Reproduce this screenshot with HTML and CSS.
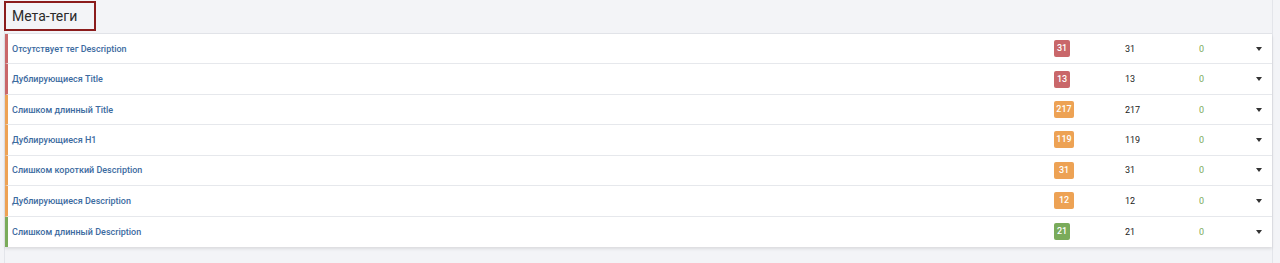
FILE: index.html
```html
<!DOCTYPE html>
<html>
<head>
<meta charset="utf-8">
<link rel="stylesheet" href="styles.css">
</head>
<body>
<div class="page">
  <div class="panel">
    <div class="panel-head">
      <h2 class="title">Мета-теги</h2>
    </div>
    <div class="rows">
      <div class="row red"><a class="name">Отсутствует тег Description</a><span class="badge">31</span><span class="num">31</span><span class="zero">0</span><span class="caret"></span></div>
      <div class="row red"><a class="name">Дублирующиеся Title</a><span class="badge">13</span><span class="num">13</span><span class="zero">0</span><span class="caret"></span></div>
      <div class="row orange"><a class="name">Слишком длинный Title</a><span class="badge">217</span><span class="num">217</span><span class="zero">0</span><span class="caret"></span></div>
      <div class="row orange"><a class="name">Дублирующиеся H1</a><span class="badge">119</span><span class="num">119</span><span class="zero">0</span><span class="caret"></span></div>
      <div class="row orange"><a class="name">Слишком короткий Description</a><span class="badge">31</span><span class="num">31</span><span class="zero">0</span><span class="caret"></span></div>
      <div class="row orange"><a class="name">Дублирующиеся Description</a><span class="badge">12</span><span class="num">12</span><span class="zero">0</span><span class="caret"></span></div>
      <div class="row green"><a class="name">Слишком длинный Description</a><span class="badge">21</span><span class="num">21</span><span class="zero">0</span><span class="caret"></span></div>
    </div>
  </div>
</div>
</body>
</html>
```
FILE: styles.css
```css
html, body {
  margin: 0;
  padding: 0;
  background: #f3f4f7;
  font-family: Roboto, "Liberation Sans", sans-serif;
}
.page {
  padding: 0 7px 0 4px;
  height: 263px;
  box-sizing: border-box;
}
.panel {
  border-left: 1px solid #e3e5ea;
  border-right: 1px solid #e3e5ea;
  height: 263px;
  box-sizing: border-box;
  background: #f3f4f7;
}
.panel-head {
  height: 33px;
  border-bottom: 1px solid #e1e3e8;
  position: relative;
}
.title {
  position: absolute;
  left: -1px;
  top: 1px;
  width: 92px;
  height: 30px;
  box-sizing: border-box;
  border: 2px solid #8b1c1c;
  margin: 0;
  padding: 0 0 0 6px;
  font-size: 14px;
  font-weight: 400;
  line-height: 26px;
  color: #2b2b2b;
}
.rows {
  background: #fff;
  box-shadow: 0 2px 3px rgba(0,0,0,0.1);
}
.row {
  display: flex;
  align-items: center;
  height: 30.43px;
  box-sizing: border-box;
  border-bottom: 1px solid #e6e8ec;
  border-left: 3px solid #c9676a;
  font-size: 9px;
}
.row:last-child { border-bottom: none; }
.row.orange { border-left-color: #eda254; }
.row.green { border-left-color: #7aab5b; }
.name {
  flex: 1;
  padding-left: 4px;
  color: #3d6b9f;
  font-weight: 500;
}
.badge {
  width: 16px;
  height: 17px;
  line-height: 17px;
  text-align: center;
  color: #fff;
  border-radius: 2px;
  background: #c9676a;
  font-size: 9px;
  font-weight: 500;
  margin-right: 55px;
}
.orange .badge { background: #eda254; width: 20px; margin-right: 51px; }
.green .badge { background: #7aab5b; }
.num {
  width: 74px;
  color: #222;
}
.zero {
  width: 57px;
  color: #7aab5b;
}
.caret {
  width: 0;
  height: 0;
  border-left: 3.5px solid transparent;
  border-right: 3.5px solid transparent;
  border-top: 4px solid #333;
  margin-right: 10px;
}
```
